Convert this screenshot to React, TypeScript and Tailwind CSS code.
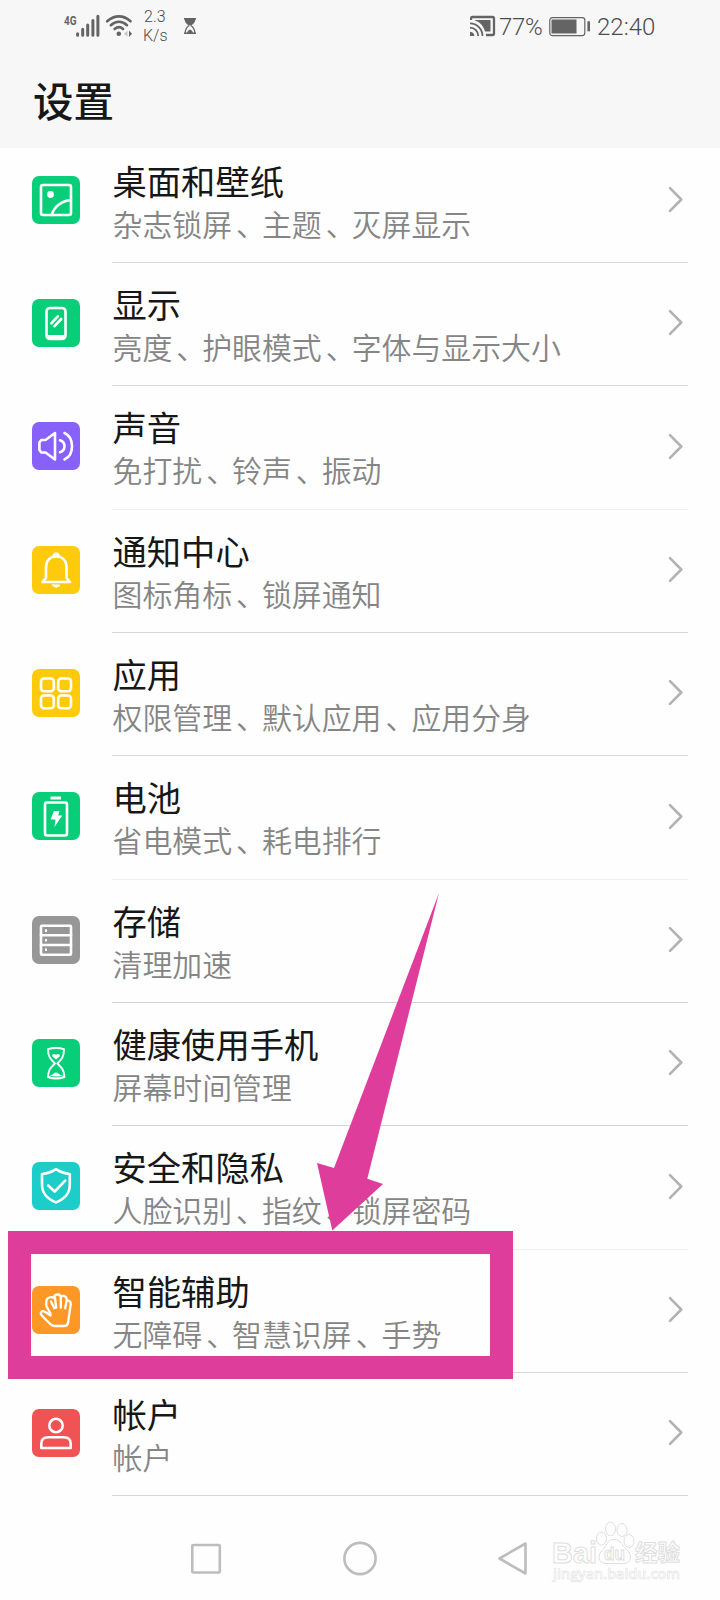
import type { ReactNode } from 'react';

type Item = { title: string; sub: string; color: string; line: string; icon: ReactNode };

const items: Item[] = [
  {
    title: '桌面和壁纸', sub: '杂志锁屏、主题、灭屏显示', color: 'bg-[#08ce7a]', line: 'border-[#d6d6d6]',
    icon: (
      <>
        <rect x="9" y="9" width="30" height="30" rx="2" />
        <circle cx="18.5" cy="18.5" r="3.4" fill="white" stroke="none" />
        <path d="M19.5 39C23 29.5 29 25 39 24" />
      </>
    ),
  },
  {
    title: '显示', sub: '亮度、护眼模式、字体与显示大小', color: 'bg-[#08ce7a]', line: 'border-[#d6d6d6]',
    icon: (
      <>
        <rect x="14.500" y="9" width="19" height="31" rx="3.5" />
        <path d="M14.500 36H33.500V38Q33 40.500 30 40.500H18Q14.500 40.500 14.500 38Z" fill="white" stroke="none" />
        <path d="M19.300 24.300l6.500-7M22.500 27.200l6.700-7.200" />
      </>
    ),
  },
  {
    title: '声音', sub: '免打扰、铃声、振动', color: 'bg-[#8860fa]', line: 'border-[#efefef]',
    icon: (
      <>
        <path d="M23 11v26.500L13.500 30.500H9.300L7.400 28V20.500L9.300 18H13.500Z" />
        <path d="M28 18.300A6.200 6.200 0 0 1 28 30.200M32.500 11C42.500 15.500 42.500 33 32.500 37.500" />
      </>
    ),
  },
  {
    title: '通知中心', sub: '图标角标、锁屏通知', color: 'bg-[#fdcb0c]', line: 'border-[#d6d6d6]',
    icon: (
      <>
        <path d="M10.500 36L14 32V21.500C14 14.500 18 10.500 24.200 10.500S34.500 14.500 34.500 21.500V32L38 36Z" />
        <path d="M22 9a2.500 2.500 0 0 1 4.500 0Z" />
        <path d="M20.500 39h7.500q-3.700 4.500-7.500 0Z" fill="white" strokeWidth="1" />
      </>
    ),
  },
  {
    title: '应用', sub: '权限管理、默认应用、应用分身', color: 'bg-[#fdcb0c]', line: 'border-[#d6d6d6]',
    icon: (
      <>
        <rect x="9" y="9.500" width="12.800" height="12.800" rx="3" />
        <rect x="26.200" y="9.500" width="12.800" height="12.800" rx="3" />
        <rect x="9" y="26.500" width="12.800" height="12.800" rx="3" />
        <rect x="26.200" y="26.500" width="12.800" height="12.800" rx="3" />
      </>
    ),
  },
  {
    title: '电池', sub: '省电模式、耗电排行', color: 'bg-[#08ce7a]', line: 'border-[#efefef]',
    icon: (
      <>
        <rect x="13" y="10.500" width="22" height="33" rx="2" />
        <path d="M18.500 6h10.500" strokeWidth="3" strokeLinecap="butt" />
        <path d="M22 19h5.500l-1.300 4.500h4L22.500 35l1-7.500h-5Z" fill="white" stroke="none" />
      </>
    ),
  },
  {
    title: '存储', sub: '清理加速', color: 'bg-[#979797]', line: 'border-[#d6d6d6]',
    icon: (
      <>
        <rect x="9" y="9.700" width="30" height="29" rx="1" />
        <path d="M9 19.300h30M9 29h30" strokeWidth="2.600" />
        <path d="M13 14.600h2M13 24.200h2M13 33.800h2" strokeLinecap="butt" />
      </>
    ),
  },
  {
    title: '健康使用手机', sub: '屏幕时间管理', color: 'bg-[#08ce7a]', line: 'border-[#d6d6d6]',
    icon: (
      <>
        <path strokeWidth="1.900" d="M16 10.200Q24 7.800 32 10.200C32 17.500 30 20 25.300 24.500C30 29 32 31 32.500 38Q24 41 16 38C16.300 31 18.300 29 23 24.500C18.300 20 16 17.500 16 10.200Z" />
        <path d="M24 20.500l-3.500-3q-1-2.500 1.500-2.500 1.500 0 2 1 .7-1 2-1 2.600 0 1.600 2.500Z" fill="white" stroke="none" />
        <path d="M17.500 36.800q3-1 4.300-2.300 2.200-1.800 4.400 0 1.500 1.300 4.800 2.300-6.500 1.500-13.500 0Z" fill="white" stroke="none" />
      </>
    ),
  },
  {
    title: '安全和隐私', sub: '人脸识别、指纹、锁屏密码', color: 'bg-[#1ccdca]', line: 'border-[#efefef]',
    icon: (
      <>
        <path d="M24 7.200C27.500 9.500 32.500 11.500 37.800 12V22.500C37.800 31.500 33.500 36.500 24 40.400C14.500 36.500 10 31.500 10 22.500V12C15.500 11.500 20.500 9.500 24 7.200Z" />
        <path d="M16.200 23.500l6.500 6 10.500-10.800" />
      </>
    ),
  },
  {
    title: '智能辅助', sub: '无障碍、智慧识屏、手势', color: 'bg-[#fd9827]', line: 'border-[#d6d6d6]',
    icon: (
      <g strokeWidth="2.300">
        <path d="M22.500 40H32Q35.500 40 36 37L38.700 18.500C39 15.500 37 14 34.700 15V13C34.500 10 31 9 28.800 11C28 7.500 22.300 7.500 22 12C19.500 10.500 14.500 11 14.300 15.500V20L18.500 27.500V29.500L13 25.800C9.500 24 7.500 27 10 29.800L18 37.800Q20 40 22.500 40Z" />
        <path d="M19 15.500l3.300 6.800M23 12l1.200 9.700M28.800 12v9.700M34.500 15l-1.300 7.300" />
      </g>
    ),
  },
  {
    title: '帐户', sub: '帐户', color: 'bg-[#f15355]', line: 'border-[#d6d6d6]',
    icon: (
      <>
        <circle cx="24" cy="16.500" r="6.700" />
        <path d="M9.300 39V34.500Q9.300 28.200 16.500 28.200H31.500Q38.700 28.200 38.700 34.500V39Z" />
      </>
    ),
  },
];

function StatusBar() {
  return (
    <div className="flex h-[54px] items-start pl-[63px] font-[Roboto] font-[350] text-[#4c4c4c]">
      <svg className="mt-[12px] h-[26px] w-[71px]" viewBox="63 12 71 26" fill="none" stroke="#646464">
        <text x="64" y="24.500" fontSize="12.500" fontWeight="700" textLength="12.500" lengthAdjust="spacingAndGlyphs" fill="#646464" stroke="none">4G</text>
        <path strokeWidth="3" strokeLinecap="round" d="M77.600 33.700v1.500M82.700 29.300v5.900M87.700 25v10.200M92.900 20.500v14.700M97.900 16.200v19" />
        <path strokeWidth="2.600" strokeLinecap="round" d="M107.200 21.300C114.500 14.800 123.500 14.800 130.500 21.300M110.800 25.200C116 20.700 122 20.700 127 25.200M114.600 29C117.500 26.600 120.500 26.600 123 29" />
        <circle cx="118.800" cy="33.700" r="2.300" fill="#646464" stroke="none" />
        <path d="M129 30.500v6.500l3-3.300Z" fill="#646464" stroke="none" />
        <path d="M127.500 30.800v5.800l-3.500-2.900Z" fill="#c4c4c4" stroke="none" />
      </svg>
      <div className="ml-[9px] mt-[8px] w-[30px] text-[16px] leading-[18.500px]">
        <div className="pl-[1px]">2.3</div>
        <div>K/s</div>
      </div>
      <svg className="ml-[10px] mt-[17px] h-[18px] w-[14px]" viewBox="0 0 14 18" fill="#646464">
        <path d="M1 1h12v1.500H1ZM1.500 2h11q-.3 4-4.500 6.500h-2Q1.800 6 1.500 2ZM1 15.500h12V17H1Z" />
        <path d="M6 8.500Q2.200 11.500 2.200 16M8 8.500q3.800 3 3.800 7.500" fill="none" stroke="#646464" strokeWidth="1.200" />
        <path d="M4 16q.5-3 3-3.500 2.500.5 3 3.500Z" />
      </svg>
      <svg className="ml-[273px] mt-[15px] h-[22px] w-[26px]" viewBox="0 0 26 22" fill="none" stroke="#646464" strokeWidth="2">
        <path d="M1 5V3.500Q1 2 2.500 2H22.500Q24 2 24 3.500V18.500Q24 20 22.500 20H16" strokeWidth="2.300" />
        <path d="M5 5h15.500v11.500H15C13.500 11 10 7 5 5.500Z" fill="#646464" stroke="none" />
        <path d="M0 8.300C7 8.300 12.500 14 12.500 21M0 12.700C4.700 12.700 8.300 16.500 8.300 21" strokeWidth="1.800" />
        <path d="M0 16.700Q4.300 17 4.300 21H0Z" fill="#646464" stroke="none" />
      </svg>
      <div className="ml-[3px] mt-[13px] w-[45px] whitespace-nowrap text-[24px] leading-[28px] tracking-[-0.300px]">77%</div>
      <svg className="ml-[5px] mt-[16px] h-[21px] w-[42px]" viewBox="0 0 42 21">
        <rect x=".8" y="1.600" width="35" height="18" rx="2.500" fill="none" stroke="#646464" strokeWidth="1.200" />
        <rect x="2.500" y="3.500" width="25" height="14" fill="#646464" />
        <path d="M39.700 5.300v10" stroke="#646464" strokeWidth="2.600" />
      </svg>
      <div className="ml-[6px] mt-[13px] whitespace-nowrap text-[24px] leading-[28px]">22:40</div>
    </div>
  );
}

function Row({ title, sub, color, line, icon }: Item) {
  const parts = sub.split('、');
  return (
    <li className="flex h-[123.350px] pl-8 pr-8">
      <div className={`mt-[36px] flex h-12 w-12 shrink-0 rounded-[7px] ${color}`}>
        <svg className="h-12 w-12" viewBox="0 0 48 48" fill="none" stroke="white" strokeWidth="2.600" strokeLinecap="round" strokeLinejoin="round">
          {icon}
        </svg>
      </div>
      <div className={`ml-8 flex flex-1 border-b ${line}`}>
        <div className="flex-1 whitespace-nowrap pl-[0.500px]">
          <div className="mt-[18px] text-[34.300px] leading-[44px] text-[#171717]">{title}</div>
          <div className="text-[29.900px] font-[350] leading-[42px] text-[#858585]">
            {parts.map((part, i) => (
              <span key={part}>
                {i > 0 && <span className="inline-block w-[1em] indent-[4px]">、</span>}
                {part}
              </span>
            ))}
          </div>
        </div>
        <svg className="mr-[3px] mt-[46.500px] h-[27px] w-[18px]" viewBox="0 0 18 27" fill="none" stroke="#b2b2b2" strokeWidth="2.600" strokeLinecap="round" strokeLinejoin="round">
          <path d="M3 2.200L14.300 13.500 3 24.800" />
        </svg>
      </div>
    </li>
  );
}

export default function App() {
  return (
    <div className="relative flex h-[1600px] w-[720px] flex-col overflow-hidden bg-[#fefefe] font-['Noto_Sans_CJK_SC',sans-serif]">
      <header className="h-[148px] shrink-0 bg-[#f7f7f7]">
        <StatusBar />
        <h1 className="pl-[33px] pt-[16px] text-[40.500px] font-medium leading-[60px] text-[#171717]">设置</h1>
      </header>
      <ul className="-mt-[8.500px] shrink-0">
        {items.map((it) => <Row key={it.title} {...it} />)}
      </ul>
      <nav className="flex flex-1 items-start pl-[190px] pt-[43.500px]">
        <svg className="h-[36px] w-[340px]" viewBox="190 1540 340 36" fill="none" stroke="#bdbdbd" strokeWidth="2.600" strokeLinejoin="round">
          <rect x="192.300" y="1545" width="27.500" height="27.500" rx="1" />
          <circle cx="360" cy="1558.500" r="15.600" />
          <path d="M525.500 1543.500v30L499.500 1558.500Z" />
        </svg>
      </nav>

      <svg className="absolute left-[545px] top-[1510px] h-[85px] w-[150px] overflow-visible" viewBox="545 1510 150 85" fill="#fefefe" stroke="#dfdfdf" strokeWidth="1">
        <text x="552" y="1562.500" fontFamily="Liberation Sans" fontWeight="700" fontSize="30" textLength="45" lengthAdjust="spacingAndGlyphs">Bai</text>
        <ellipse cx="601.500" cy="1538.500" rx="5" ry="6.500" />
        <ellipse cx="610.500" cy="1529" rx="5" ry="6.800" />
        <ellipse cx="622" cy="1530" rx="5" ry="6.500" />
        <ellipse cx="629" cy="1541" rx="5" ry="6.500" />
        <path d="M614 1539.500C621 1539.500 622 1546 627 1550C633 1556 631 1563 624 1563.500H606C598 1563 597 1556 602 1550.500C607 1546 607 1539.500 614 1539.500Z" />
        <text x="604" y="1559.500" fontFamily="Liberation Sans" fontWeight="700" fontSize="19" textLength="21" lengthAdjust="spacingAndGlyphs">du</text>
        <text x="635" y="1561" fontWeight="700" fontSize="22.500">经验</text>
        <text x="553" y="1578.500" fontFamily="Open Sans" fontWeight="600" fontSize="15" textLength="127" lengthAdjust="spacingAndGlyphs" strokeWidth=".6" stroke="#e2e2e2">jingyan.baidu.com</text>
      </svg>

      <div className="absolute left-[7.500px] top-[1231px] h-[148px] w-[505px] border-[23px] border-[#df3d9b]" />
      <svg className="absolute left-[310px] top-[890px] h-[342px] w-[135px]" viewBox="310 890 135 342" fill="#df3d9b">
        <path d="M439 893L367.300 1178.700 383 1184 332.300 1230.500 317 1163 334 1168Z" />
      </svg>
    </div>
  );
}
